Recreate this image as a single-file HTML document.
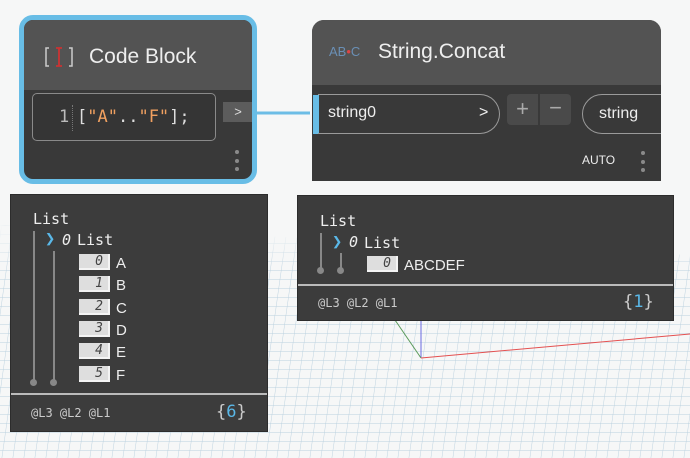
<!DOCTYPE html>
<html><head><style>
*{box-sizing:border-box;margin:0;padding:0}
body{width:690px;height:458px;background:#f6f7f7;position:relative;overflow:hidden;font-family:"Liberation Sans",sans-serif}
.abs{position:absolute}
.mono{font-family:"DejaVu Sans Mono","Liberation Mono",monospace}
.idx{position:absolute;width:31px;height:16px;background:#dedede;border-right:2px solid #f4f4f4;border-bottom:2px solid #f4f4f4;color:#444;font-style:italic;font-size:13px;text-align:right;padding-right:5px;line-height:15px}
.lt{position:absolute;color:#eee;font-size:15px}
.dot{position:absolute;width:4px;height:4px;border-radius:2px;background:#8a8a8a}
</style></head><body>
<svg class="abs" style="left:0;top:0" width="690" height="458">
<defs>
<pattern id="g" width="11" height="9" patternUnits="userSpaceOnUse" patternTransform="skewX(-8)">
<path d="M0 0H11M0 0V9" stroke="#b9d0de" stroke-width="0.9" fill="none"/>
</pattern>
<linearGradient id="f" x1="0" y1="0" x2="0" y2="1"><stop offset="0" stop-color="#f6f7f7" stop-opacity="1"/><stop offset="0.2" stop-color="#f6f7f7" stop-opacity="0"/></linearGradient>
</defs>
<polygon points="0,225 690,255 690,458 0,458" fill="url(#g)"/>
<polygon points="0,225 690,255 690,458 0,458" fill="url(#f)"/>
<line x1="421" y1="320" x2="421" y2="358" stroke="#6a6ae0" stroke-width="1"/>
<line x1="395" y1="320" x2="421" y2="358" stroke="#5a9a5a" stroke-width="1"/>
<line x1="421" y1="358" x2="690" y2="334" stroke="#e45050" stroke-width="1"/>
<line x1="256" y1="113" x2="310" y2="113" stroke="#6cbde6" stroke-width="3"/>
</svg>

<!-- Code Block -->
<div class="abs" style="left:19px;top:15px;width:238px;height:169px;border:5px solid #68bde6;border-radius:14px;background:#393939;overflow:hidden">
 <div class="abs" style="left:0;top:0;width:228px;height:70px;background:#535353"></div>
 <svg class="abs" style="left:20px;top:25px" width="30" height="24">
  <path d="M5 3H2V21H5M25 3H28V21H25" stroke="#ccc" stroke-width="1.5" fill="none"/>
  <path d="M12 3H18M15 3V21M12 21H18" stroke="#c33" stroke-width="1.8" fill="none"/>
 </svg>
 <div class="abs" style="left:65px;top:25px;color:#eee;font-size:21px">Code Block</div>
 <div class="abs mono" style="left:8px;top:73px;width:184px;height:48px;border:1.5px solid #8a8a8a;border-radius:5px;background:#353535"></div>
 <div class="abs mono" style="left:35px;top:87px;color:#bbb;font-size:17px">1</div>
 <div class="abs" style="left:48px;top:85px;height:26px;border-left:1px dotted #777"></div>
 <div class="abs mono" style="left:53px;top:87px;color:#ddd;font-size:17px">[<span style="color:#f0a060">"A"</span>..<span style="color:#f0a060">"F"</span>];</div>
 <div class="abs" style="left:199px;top:82px;width:30px;height:20px;background:#5c5c5c;color:#ddd;font-size:13px;text-align:center;line-height:20px">&gt;</div>
 <div class="dot" style="left:211px;top:130px"></div><div class="dot" style="left:211px;top:139px"></div><div class="dot" style="left:211px;top:147px"></div>
</div>

<!-- String.Concat -->
<div class="abs" style="left:312px;top:20px;width:349px;height:161px;border-radius:12px 12px 0 0;background:#393939;overflow:hidden">
 <div class="abs" style="left:0;top:0;width:349px;height:65px;background:#535353"></div>
 <div class="abs" style="left:17px;top:24px;color:#6a8fb5;font-size:13px">AB<span style="color:#d44">•</span>C</div>
 <div class="abs" style="left:66px;top:20px;color:#eee;font-size:21px">String.Concat</div>
 <div class="abs" style="left:1px;top:75px;width:6px;height:39px;background:#68bde6"></div>
 <div class="abs" style="left:6px;top:74px;width:182px;height:40px;border:1.5px solid #9a9a9a;border-left:none;border-radius:0 20px 20px 0"></div>
 <div class="abs" style="left:16px;top:84px;color:#eee;font-size:16px">string0</div>
 <div class="abs" style="left:167px;top:84px;color:#eee;font-size:16px">&gt;</div>
 <div class="abs" style="left:195px;top:74px;width:31px;height:31px;background:#4a4a4a;border-radius:4px 0 0 4px;color:#aaa;font-size:22px;text-align:center;line-height:30px">+</div>
 <div class="abs" style="left:228px;top:74px;width:31px;height:31px;background:#4a4a4a;border-radius:0 4px 4px 0;color:#aaa;font-size:22px;text-align:center;line-height:28px">−</div>
 <div class="abs" style="left:270px;top:74px;width:120px;height:40px;border:1.5px solid #9a9a9a;border-radius:20px"></div>
 <div class="abs" style="left:287px;top:85px;color:#eee;font-size:16px">string</div>
 <div class="abs" style="left:270px;top:133px;color:#eee;font-size:12px">AUTO</div>
 <div class="dot" style="left:329px;top:131px"></div><div class="dot" style="left:329px;top:140px"></div><div class="dot" style="left:329px;top:148px"></div>
</div>

<!-- Left preview -->
<div class="abs mono" style="left:10px;top:194px;width:258px;height:238px;background:#3c3c3c;border:1px solid #2c2c2c">
 <div class="lt" style="left:22px;top:15px">List</div>
 <div class="abs" style="left:22px;top:36px;width:2px;height:150px;background:#888"></div>
 <div class="abs" style="left:42px;top:56px;width:2px;height:130px;background:#888"></div>
 <div class="abs" style="left:19px;top:184px;width:7px;height:7px;border-radius:4px;background:#888"></div>
 <div class="abs" style="left:39px;top:184px;width:7px;height:7px;border-radius:4px;background:#888"></div>
 <div class="abs" style="left:34px;top:34px;color:#5ab8e8;font-size:17px;font-weight:bold">❯</div>
 <div class="lt" style="left:51px;top:36px;font-style:italic">0</div>
 <div class="lt" style="left:66px;top:36px">List</div>
 <div class="idx" style="left:68px;top:59px">0</div><div class="lt" style="left:105px;top:60px;font-family:'Liberation Sans',sans-serif">A</div>
 <div class="idx" style="left:68px;top:81px">1</div><div class="lt" style="left:105px;top:82px;font-family:'Liberation Sans',sans-serif">B</div>
 <div class="idx" style="left:68px;top:104px">2</div><div class="lt" style="left:105px;top:105px;font-family:'Liberation Sans',sans-serif">C</div>
 <div class="idx" style="left:68px;top:126px">3</div><div class="lt" style="left:105px;top:127px;font-family:'Liberation Sans',sans-serif">D</div>
 <div class="idx" style="left:68px;top:148px">4</div><div class="lt" style="left:105px;top:149px;font-family:'Liberation Sans',sans-serif">E</div>
 <div class="idx" style="left:68px;top:171px">5</div><div class="lt" style="left:105px;top:172px;font-family:'Liberation Sans',sans-serif">F</div>
 <div class="abs" style="left:0;top:198px;width:256px;height:2px;background:#bbb"></div>
 <div class="abs" style="left:20px;top:211px;color:#ccc;font-size:12px">@L3 @L2 @L1</div>
 <div class="abs" style="left:205px;top:207px;color:#ccc;font-size:17px">{<span style="color:#5ab8e8">6</span>}</div>
</div>

<!-- Right preview -->
<div class="abs mono" style="left:297px;top:195px;width:377px;height:126px;background:#3c3c3c;border:1px solid #2c2c2c">
 <div class="lt" style="left:22px;top:16px">List</div>
 <div class="abs" style="left:22px;top:37px;width:2px;height:36px;background:#888"></div>
 <div class="abs" style="left:42px;top:57px;width:2px;height:16px;background:#888"></div>
 <div class="abs" style="left:19px;top:71px;width:7px;height:7px;border-radius:4px;background:#888"></div>
 <div class="abs" style="left:39px;top:71px;width:7px;height:7px;border-radius:4px;background:#888"></div>
 <div class="abs" style="left:34px;top:36px;color:#5ab8e8;font-size:17px;font-weight:bold">❯</div>
 <div class="lt" style="left:51px;top:37px;font-style:italic">0</div>
 <div class="lt" style="left:66px;top:38px">List</div>
 <div class="idx" style="left:69px;top:60px">0</div><div class="lt" style="left:106px;top:61px;font-family:'Liberation Sans',sans-serif">ABCDEF</div>
 <div class="abs" style="left:0;top:88px;width:375px;height:2px;background:#bbb"></div>
 <div class="abs" style="left:20px;top:100px;color:#ccc;font-size:12px">@L3 @L2 @L1</div>
 <div class="abs" style="left:325px;top:96px;color:#ccc;font-size:17px">{<span style="color:#5ab8e8">1</span>}</div>
</div>
</body></html>
